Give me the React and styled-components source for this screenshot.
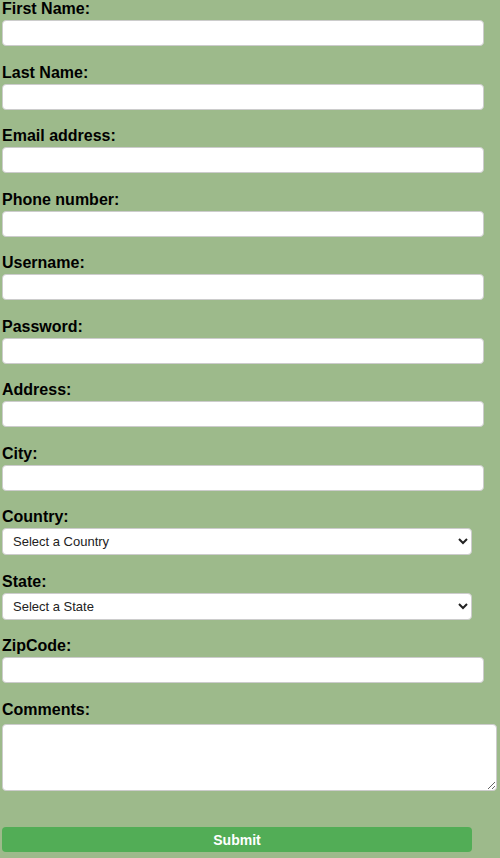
import React from 'react'
import styled, { createGlobalStyle } from 'styled-components';

const GlobalStyle = createGlobalStyle`
body{
    margin:0;
    background-color:#9dba8b;
    font-family:"Liberation Sans", Arial, sans-serif;
}
`;

const Form = styled.form`
display:flex;
flex-direction:column;
padding:0 2px;
`;

const Field = styled.div`
display:flex;
flex-direction:column;
align-items:flex-start;
margin-bottom:17.5px;
`;

const Label = styled.label`
font-size:16px;
font-weight:700;
line-height:18px;
color:#000;
margin-bottom:2px;
`;

const Input = styled.input`
box-sizing:border-box;
width:482px;
height:26px;
margin:0;
padding:2px 6px;
border:1px solid #ccc;
border-radius:4px;
background:#fff;
font-family:"Liberation Sans", Arial, sans-serif;
font-size:13px;
`;

const Select = styled.select`
box-sizing:border-box;
width:470px;
height:27px;
margin:0;
padding:0 6px;
border:1px solid #ccc;
border-radius:4px;
background:#fff;
color:#222;
font-family:"Liberation Sans", Arial, sans-serif;
font-size:13px;
`;

const TextArea = styled.textarea`
box-sizing:border-box;
width:495px;
height:67px;
margin:3px 0 0;
padding:4px 6px;
border:1px solid #ccc;
border-radius:4px;
background:#fff;
font-family:"Liberation Sans", Arial, sans-serif;
`;

const Submit = styled.button`
box-sizing:border-box;
width:470px;
height:25px;
margin-top:19px;
border:none;
border-radius:4px;
background-color:#52ad56;
color:#fff;
font-family:"Liberation Sans", Arial, sans-serif;
font-size:14px;
font-weight:700;
cursor:pointer;
`;

const textFields = [
    { id: 'firstName', label: 'First Name:', type: 'text' },
    { id: 'lastName', label: 'Last Name:', type: 'text' },
    { id: 'email', label: 'Email address:', type: 'email' },
    { id: 'phone', label: 'Phone number:', type: 'tel' },
    { id: 'username', label: 'Username:', type: 'text' },
    { id: 'password', label: 'Password:', type: 'password' },
    { id: 'address', label: 'Address:', type: 'text' },
    { id: 'city', label: 'City:', type: 'text' },
];

export default function App() {
    return (
        <>
            <GlobalStyle />
            <Form onSubmit={(e) => e.preventDefault()}>
                {textFields.map((f) => (
                    <Field key={f.id}>
                        <Label htmlFor={f.id}>{f.label}</Label>
                        <Input id={f.id} type={f.type} />
                    </Field>
                ))}
                <Field>
                    <Label htmlFor="country">Country:</Label>
                    <Select id="country" defaultValue="">
                        <option value="">Select a Country</option>
                    </Select>
                </Field>
                <Field>
                    <Label htmlFor="state">State:</Label>
                    <Select id="state" defaultValue="">
                        <option value="">Select a State</option>
                    </Select>
                </Field>
                <Field>
                    <Label htmlFor="zip">ZipCode:</Label>
                    <Input id="zip" type="text" />
                </Field>
                <Field>
                    <Label htmlFor="comments">Comments:</Label>
                    <TextArea id="comments" />
                </Field>
                <Submit type="submit">Submit</Submit>
            </Form>
        </>
    )
}
